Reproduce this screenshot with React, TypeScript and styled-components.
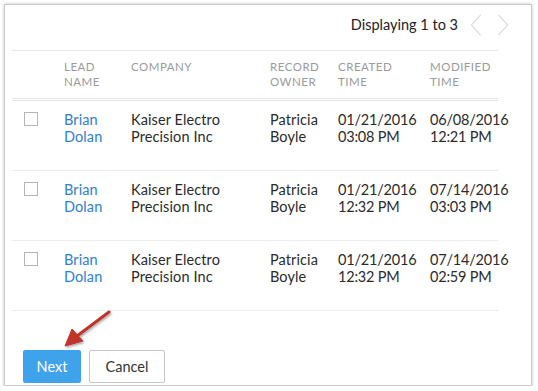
import styled, { createGlobalStyle } from 'styled-components';

const GlobalStyle = createGlobalStyle`
  html, body {
    margin: 0;
    padding: 0;
    background: #ffffff;
  }
  body {
    font-family: Lato, "Open Sans", sans-serif;
    color: #333333;
  }
`;

type Lead = {
  first: string;
  last: string;
  company: [string, string];
  owner: [string, string];
  created: [string, string];
  modified: [string, string];
};

const leads: Lead[] = [
  {
    first: 'Brian',
    last: 'Dolan',
    company: ['Kaiser Electro', 'Precision Inc'],
    owner: ['Patricia', 'Boyle'],
    created: ['01/21/2016', '03:08 PM'],
    modified: ['06/08/2016', '12:21 PM'],
  },
  {
    first: 'Brian',
    last: 'Dolan',
    company: ['Kaiser Electro', 'Precision Inc'],
    owner: ['Patricia', 'Boyle'],
    created: ['01/21/2016', '12:32 PM'],
    modified: ['07/14/2016', '03:03 PM'],
  },
  {
    first: 'Brian',
    last: 'Dolan',
    company: ['Kaiser Electro', 'Precision Inc'],
    owner: ['Patricia', 'Boyle'],
    created: ['01/21/2016', '12:32 PM'],
    modified: ['07/14/2016', '02:59 PM'],
  },
];

const columns = '52px 67px 139px 68px 92px 1fr';

const App = () => {
  return (
    <>
      <GlobalStyle />
      <Card>
        <TopBar>
          <Counter>Displaying 1 to 3</Counter>
          <Pager>
            <Chevron viewBox="0 0 12 24">
              <polyline points="11,1 1,12 11,23" />
            </Chevron>
            <Chevron viewBox="0 0 12 24">
              <polyline points="1,1 11,12 1,23" />
            </Chevron>
          </Pager>
        </TopBar>

        <Table>
          <HeadRow>
            <span />
            <HeadCell>Lead<br />Name</HeadCell>
            <HeadCell>Company</HeadCell>
            <HeadCell>Record<br />Owner</HeadCell>
            <HeadCell>Created<br />Time</HeadCell>
            <HeadCell>Modified<br />Time</HeadCell>
          </HeadRow>

          {leads.map((lead, i) => (
            <Row key={i}>
              <CheckCell>
                <Checkbox />
              </CheckCell>
              <NameCell>{lead.first}<br />{lead.last}</NameCell>
              <Cell>{lead.company[0]}<br />{lead.company[1]}</Cell>
              <Cell>{lead.owner[0]}<br />{lead.owner[1]}</Cell>
              <DateCell>{lead.created[0]}<br />{lead.created[1]}</DateCell>
              <DateCell>{lead.modified[0]}<br />{lead.modified[1]}</DateCell>
            </Row>
          ))}
        </Table>

        <Footer>
          <NextButton>Next</NextButton>
          <CancelButton>Cancel</CancelButton>
          <Arrow width="60" height="46" viewBox="0 0 60 46">
            <defs>
              <filter id="arrowShadow" x="-30%" y="-30%" width="160%" height="160%">
                <feDropShadow dx="1" dy="1.5" stdDeviation="1.2" floodColor="#000" floodOpacity="0.35" />
              </filter>
            </defs>
            <g filter="url(#arrowShadow)" fill="#c0352a" stroke="#c0352a">
              <line x1="52" y1="4" x2="20" y2="28" strokeWidth="3" strokeLinecap="round" />
              <polygon points="8,38 15,21 26,33" strokeWidth="1" strokeLinejoin="round" />
            </g>
          </Arrow>
        </Footer>
      </Card>
    </>
  );
};

const Card = styled.div`
  position: relative;
  box-sizing: border-box;
  width: 528px;
  height: 382px;
  margin: 4px 0 0 4px;
  border: 1px solid #c9c9c9;
  box-shadow: 0 0 3px rgba(0, 0, 0, 0.25);
  background: #ffffff;
  display: flex;
  flex-direction: column;
`;

const TopBar = styled.div`
  height: 45px;
  box-sizing: border-box;
  display: flex;
  align-items: center;
  justify-content: flex-end;
  padding: 0 22px 6px 0;
`;

const Counter = styled.span`
  font-size: 14.5px;
  color: #222222;
  margin-right: 12px;
`;

const Pager = styled.div`
  display: flex;
  gap: 15px;
`;

const Chevron = styled.svg`
  width: 12px;
  height: 22px;
  fill: none;
  stroke: #d6d6d6;
  stroke-width: 1.2;
`;

const Table = styled.div`
  margin: 0 33px 0 7px;
  border-top: 1px solid #e6e6e6;
`;

const HeadRow = styled.div`
  display: grid;
  grid-template-columns: ${columns};
  height: 50px;
  padding-top: 8px;
  box-sizing: border-box;
  border-bottom: 3px double #e4e4e4;
`;

const HeadCell = styled.div`
  font-size: 11.5px;
  line-height: 15px;
  letter-spacing: 0.5px;
  text-transform: uppercase;
  color: #9a9a9a;
`;

const Row = styled.div`
  display: grid;
  grid-template-columns: ${columns};
  height: 70px;
  box-sizing: border-box;
  padding-top: 10px;
  border-bottom: 1px solid #ececec;
`;

const Cell = styled.div`
  font-size: 14.5px;
  line-height: 17px;
  letter-spacing: 0.1px;
  color: #2b2b2b;
`;

const DateCell = styled(Cell)`
  letter-spacing: -0.2px;
`;

const NameCell = styled(Cell)`
  color: #2f80d1;
`;

const CheckCell = styled.div`
  padding: 1px 0 0 12px;
`;

const Checkbox = styled.div`
  width: 12px;
  height: 12px;
  border: 1px solid #b5b5b5;
  background: #ffffff;
`;

const Footer = styled.div`
  position: relative;
  margin-top: auto;
  display: flex;
  gap: 8px;
  padding: 0 0 2px 18px;
`;

const BaseButton = styled.button`
  box-sizing: border-box;
  height: 33px;
  font-family: Lato, "Open Sans", sans-serif;
  font-size: 14.5px;
  border-radius: 2px;
  cursor: pointer;
`;

const NextButton = styled(BaseButton)`
  width: 58px;
  border: none;
  background: #3fa3ec;
  color: #ffffff;
`;

const CancelButton = styled(BaseButton)`
  width: 76px;
  border: 1px solid #c6c6c6;
  background: #ffffff;
  color: #333333;
`;

const Arrow = styled.svg`
  position: absolute;
  left: 52px;
  top: -42px;
  overflow: visible;
`;

export default App;
